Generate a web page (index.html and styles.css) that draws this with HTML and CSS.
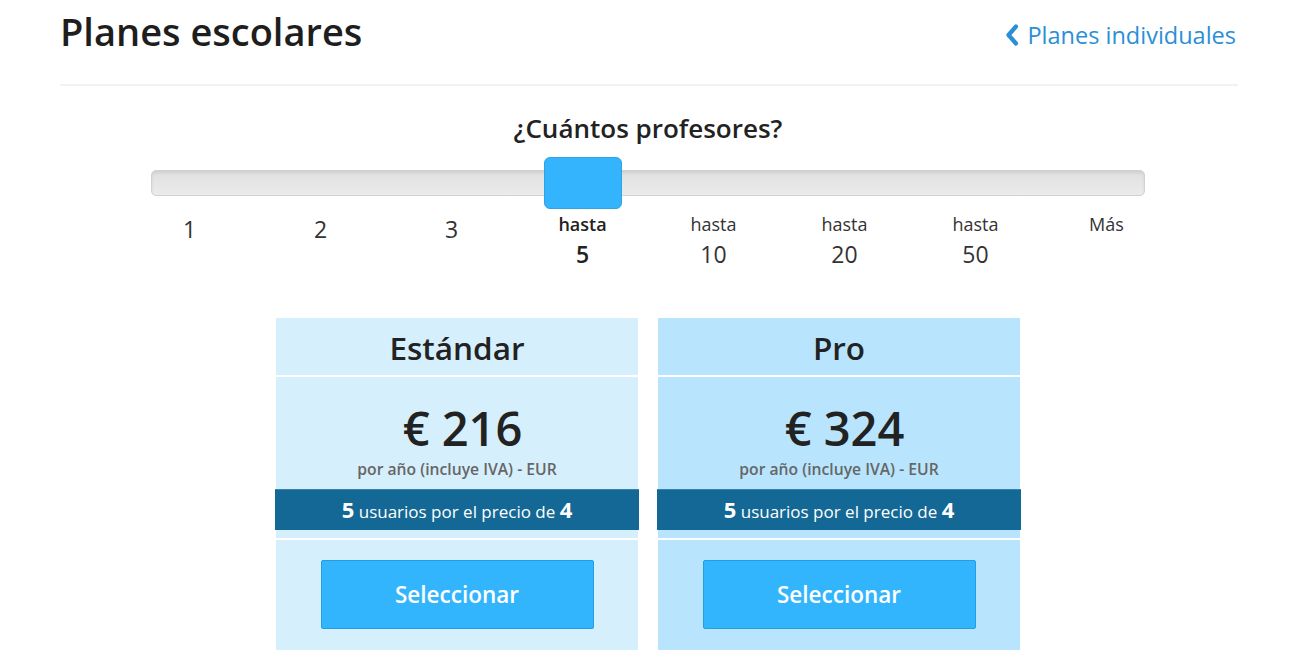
FILE: index.html
```html
<!DOCTYPE html>
<html lang="es">
<head>
<meta charset="utf-8">
<title>Planes escolares</title>
<link rel="stylesheet" href="styles.css">
</head>
<body>
<div class="page">
  <header class="top">
    <h1 class="title">Planes escolares</h1>
    <a class="back" href="#"><svg class="chev" viewBox="0 0 14 22" width="14" height="22"><path d="M11 2.5 L3.5 11 L11 19.5" fill="none" stroke="currentColor" stroke-width="4.2" stroke-linecap="round" stroke-linejoin="round"/></svg>Planes individuales</a>
  </header>
  <hr class="rule">
  <section class="picker">
    <h2 class="question">¿Cuántos profesores?</h2>
    <div class="slider">
      <div class="track"></div>
      <div class="handle"></div>
    </div>
    <div class="ticks">
      <div class="tick"><span class="num">1</span></div>
      <div class="tick"><span class="num">2</span></div>
      <div class="tick"><span class="num">3</span></div>
      <div class="tick active"><span class="up">hasta</span><span class="num">5</span></div>
      <div class="tick"><span class="up">hasta</span><span class="num">10</span></div>
      <div class="tick"><span class="up">hasta</span><span class="num">20</span></div>
      <div class="tick"><span class="up">hasta</span><span class="num">50</span></div>
      <div class="tick"><span class="up">Más</span></div>
    </div>
  </section>
  <section class="plans">
    <div class="card std">
      <div class="card-head">Estándar</div>
      <div class="card-price">
        <div class="amount">€ 216</div>
        <div class="per">por año (incluye IVA) - EUR</div>
      </div>
      <div class="deal"><b>5</b> usuarios por el precio de <b>4</b></div>
      <div class="card-foot"><a class="btn" href="#">Seleccionar</a></div>
    </div>
    <div class="card pro">
      <div class="card-head">Pro</div>
      <div class="card-price">
        <div class="amount">€ 324</div>
        <div class="per">por año (incluye IVA) - EUR</div>
      </div>
      <div class="deal"><b>5</b> usuarios por el precio de <b>4</b></div>
      <div class="card-foot"><a class="btn" href="#">Seleccionar</a></div>
    </div>
  </section>
</div>
</body>
</html>
```

FILE: styles.css
```css
* { box-sizing: border-box; }
html, body { margin: 0; padding: 0; background: #fff; }
body { font-family: "Open Sans", "Liberation Sans", sans-serif; color: #222; }
.page { width: 1178px; margin-left: 60px; }
.top { display: flex; justify-content: space-between; align-items: flex-start; padding-top: 7px; height: 84px; }
.title { margin: 0; font-size: 38px; font-weight: 600; line-height: 48px; color: #1e1e1e; }
.back { display: flex; align-items: center; gap: 8px; color: #2b8fd5; text-decoration: none; font-size: 23.5px; line-height: 40px; margin-top: 8px; margin-right: 2px; }
.chev { display: block; }
.rule { margin: 0; border: 0; height: 2px; background: #f2f2f2; }
.picker { display: flex; flex-direction: column; align-items: center; padding-right: 2px; }
.question { margin: 24px 0 0; font-size: 26px; font-weight: 600; line-height: 36px; color: #222; }
.slider { position: relative; width: 994px; height: 52px; margin-top: 11px; display: flex; align-items: center; }
.track { width: 100%; height: 26px; border-radius: 5px; border: 1px solid #d2d2d2; background: linear-gradient(#e0e0e0, #ebebeb); box-shadow: inset 0 2px 3px rgba(0,0,0,0.08); }
.handle { position: absolute; left: 393px; top: 0; width: 78px; height: 52px; border-radius: 6px; background: #33b4fd; border: 1px solid #2ea3e6; }
.ticks { display: grid; grid-template-columns: repeat(8, 131px); }
.tick { display: flex; flex-direction: column; align-items: center; height: 62px; color: #333; }
.tick .up { font-size: 18px; line-height: 30px; }
.tick .num { font-size: 23px; line-height: 31px; }
.tick .num:first-child { margin-top: 5px; }
.tick.active { font-weight: 600; color: #222; }
.plans { display: flex; justify-content: center; gap: 20px; margin-top: 47px; padding-right: 2px; }
.card { width: 362px; display: flex; flex-direction: column; align-items: center; padding-bottom: 21px; }
.std { background: #d6effc; }
.pro { background: #b8e5fd; }
.card-head { width: 100%; height: 59px; text-align: center; font-size: 31.5px; font-weight: 600; line-height: 60px; color: #222; border-bottom: 2px solid #fff; }
.card-price { width: 100%; text-align: center; padding-top: 20px; height: 112px; }
.amount { font-size: 47px; font-weight: 600; line-height: 62px; color: #222; padding-left: 11px; }
.per { font-size: 15.7px; font-weight: 600; color: #666; line-height: 20px; margin-top: 0; }
.deal { width: 364px; height: 41px; background: #136895; border-top: 1px solid #3a82aa; color: #fff; font-size: 17px; line-height: 39px; text-align: center; }
.deal b { font-size: 22px; font-weight: 700; }
.card-foot { width: 100%; border-top: 2px solid #fff; margin-top: 8px; padding-top: 20px; display: flex; justify-content: center; }
.btn { width: 273px; height: 69px; display: flex; align-items: center; justify-content: center; background: #33b5fd; border: 1px solid #229ee2; border-radius: 2px; color: #fff; text-decoration: none; font-size: 22.5px; font-weight: 600; }
```
